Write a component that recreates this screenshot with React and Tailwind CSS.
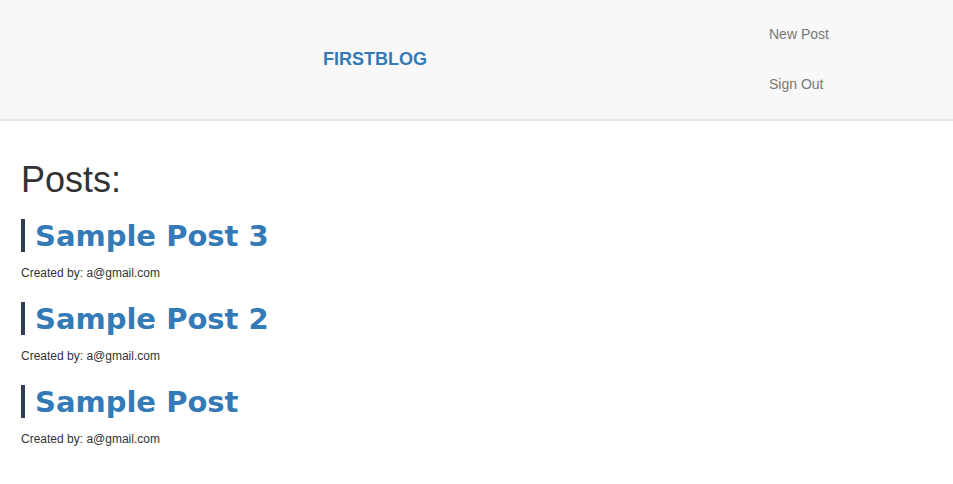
import React from 'react'

const posts = [
	{title: 'Sample Post 3', author: 'a@gmail.com'},
	{title: 'Sample Post 2', author: 'a@gmail.com'},
	{title: 'Sample Post', author: 'a@gmail.com'},
]

const Post = ({post}) => {
	return (
		<div className="mt-[20px] first:mt-0">
			<h2 className="border-l-4 border-[#2c3e50] pl-[10px] pt-[2px] text-[29px] leading-[31px] font-bold text-[#337ab7] font-['DejaVu_Sans',sans-serif]">
				{post.title}
			</h2>
			<p className="mt-[13px] text-xs leading-[17px] text-[#333]">Created by: {post.author}</p>
		</div>
	)
}

const App = () => {
	return (
		<div className="min-h-[484px] bg-white font-['Liberation_Sans',Arial,sans-serif]">
			{/* Navbar */}
			<div className="flex items-center h-[121px] pb-[2px] bg-[#f8f8f8] border-b-2 border-[#e7e7e7]">
				<a className="ml-[323px] text-lg font-bold text-[#337ab7] leading-5">FIRSTBLOG</a>
				<div className="ml-auto w-[184px] flex flex-col">
					<a className="py-[15px] text-sm leading-5 text-[#777]">New Post</a>
					<a className="py-[15px] text-sm leading-5 text-[#777]">Sign Out</a>
				</div>
			</div>

			{/* Posts */}
			<div className="px-[21px] pt-[39px]">
				<h1 className="text-4xl leading-[40px] text-[#333]">Posts:</h1>
				<div className="mt-[19px]">
					{posts.map((p) => <Post key={p.title} post={p} />)}
				</div>
			</div>
		</div>
	)
}

export default App
